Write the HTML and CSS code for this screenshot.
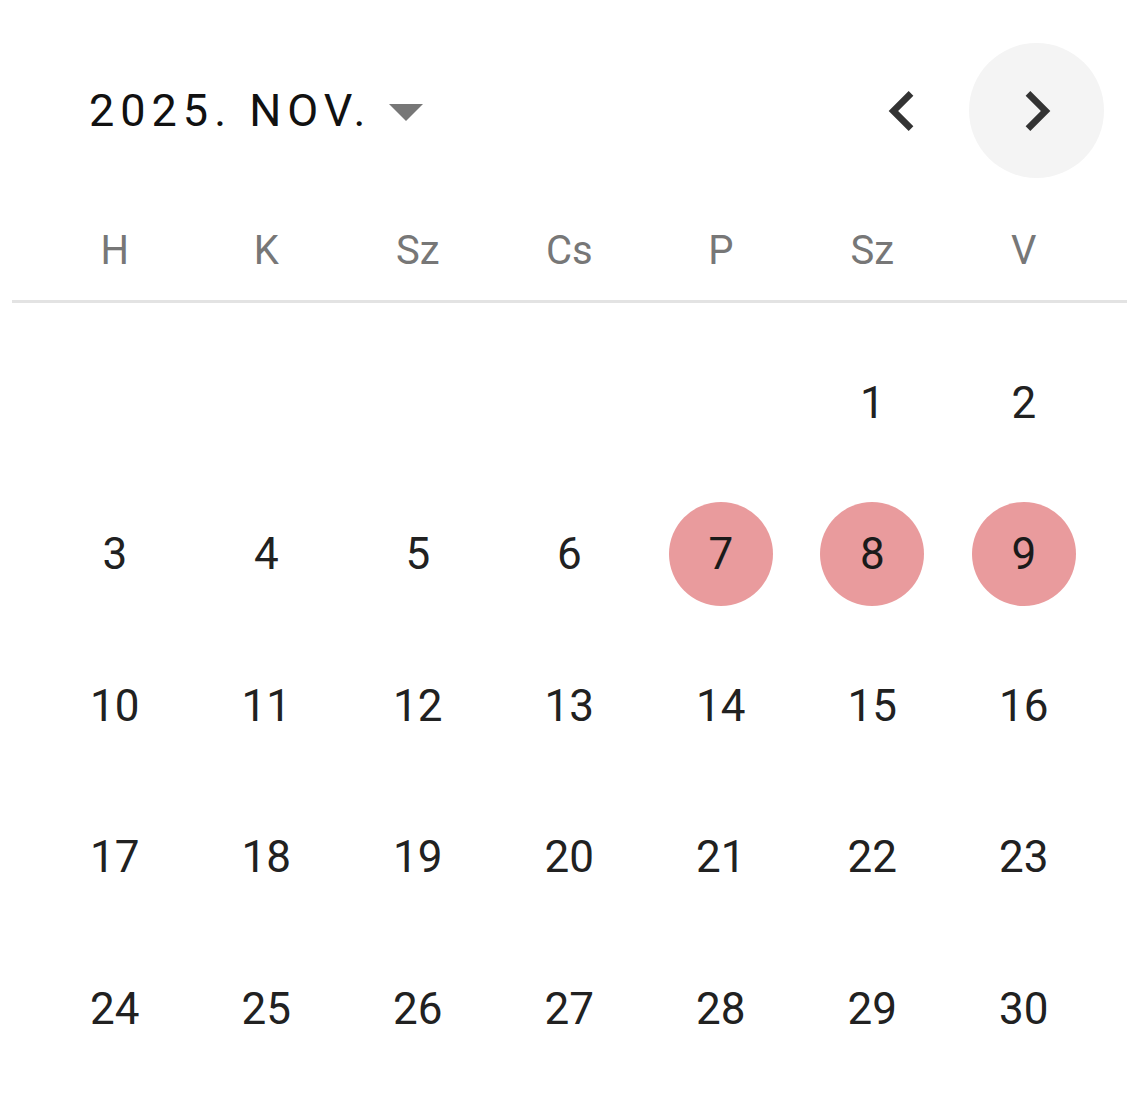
FILE: index.html
```html
<!DOCTYPE html>
<html lang="hu">
<head>
    <meta charset="UTF-8">
    <meta name="viewport" content="width=device-width, initial-scale=1.0">
    <title>Naptár - 2025. nov.</title>
    <link rel="stylesheet" href="styles.css">
</head>
<body>
    <div class="calendar">
        <div class="calendar-header">
            <button class="month-select" type="button">
                <span class="month-label">2025. NOV.</span>
                <svg class="drop-icon" viewBox="7 10 10 5" width="34" height="17">
                    <path d="M7 10l5 5 5-5z"/>
                </svg>
            </button>
            <div class="nav">
                <button class="nav-btn" type="button" aria-label="Előző hónap">
                    <svg viewBox="0 0 24 24" width="80" height="80">
                        <path d="M15.41 7.41L14 6l-6 6 6 6 1.41-1.41L10.83 12z"/>
                    </svg>
                </button>
                <button class="nav-btn nav-btn-active" type="button" aria-label="Következő hónap">
                    <svg viewBox="0 0 24 24" width="80" height="80">
                        <path d="M10 6L8.59 7.41 13.17 12l-4.58 4.59L10 18l6-6z"/>
                    </svg>
                </button>
            </div>
        </div>

        <div class="weekdays">
            <span>H</span>
            <span>K</span>
            <span>Sz</span>
            <span>Cs</span>
            <span>P</span>
            <span>Sz</span>
            <span>V</span>
        </div>

        <div class="divider"></div>

        <div class="days" id="days"></div>
    </div>

    <script>
        const days = document.getElementById('days');
        const firstOffset = 5; // 2025. nov. 1. szombat
        const daysInMonth = 30;
        const selected = [7, 8, 9];

        for (let i = 0; i < firstOffset; i++) {
            const empty = document.createElement('div');
            empty.className = 'day empty';
            days.appendChild(empty);
        }

        for (let d = 1; d <= daysInMonth; d++) {
            const cell = document.createElement('div');
            cell.className = 'day';
            const num = document.createElement('span');
            num.className = selected.includes(d) ? 'day-num selected' : 'day-num';
            num.textContent = d;
            cell.appendChild(num);
            days.appendChild(cell);
        }
    </script>
</body>
</html>
```

FILE: styles.css
```css
* {
    margin: 0;
    padding: 0;
    box-sizing: border-box;
}

body {
    font-family: Roboto, 'Noto Sans', sans-serif;
    background: #fff;
    color: #212121;
}

button {
    font: inherit;
    background: none;
    border: none;
    cursor: pointer;
}

.calendar {
    width: 1127px;
    padding-top: 43px;
}

.calendar-header {
    display: flex;
    align-items: center;
    justify-content: space-between;
    height: 135px;
    padding: 0 23px 0 89px;
}

.month-select {
    display: flex;
    align-items: center;
    color: #111;
}

.month-label {
    font-size: 45px;
    font-weight: 400;
    letter-spacing: 6px;
}

.drop-icon {
    fill: #777;
    margin-left: 18px;
    margin-top: 4px;
}

.nav {
    display: flex;
}

.nav-btn {
    width: 135px;
    height: 135px;
    border-radius: 50%;
    display: flex;
    align-items: center;
    justify-content: center;
}

.nav-btn svg {
    fill: #333;
}

.nav-btn-active {
    background: #f4f4f4;
}

.weekdays,
.days {
    display: grid;
    grid-template-columns: repeat(7, 151.5px);
    margin-left: 39px;
}

.weekdays {
    margin-top: 22px;
    height: 100px;
    align-items: center;
    justify-items: center;
    font-size: 40px;
    color: #777;
}

.divider {
    height: 3px;
    margin-left: 12px;
    background: #e3e3e3;
}

.days {
    margin-top: 24px;
    grid-auto-rows: 151.5px;
}

.day {
    display: flex;
    align-items: center;
    justify-content: center;
}

.day-num {
    width: 104px;
    height: 104px;
    border-radius: 50%;
    display: flex;
    align-items: center;
    justify-content: center;
    font-size: 44px;
    color: #212121;
}

.day-num.selected {
    background: #e99b9d;
    color: #1a1a1a;
}
```
